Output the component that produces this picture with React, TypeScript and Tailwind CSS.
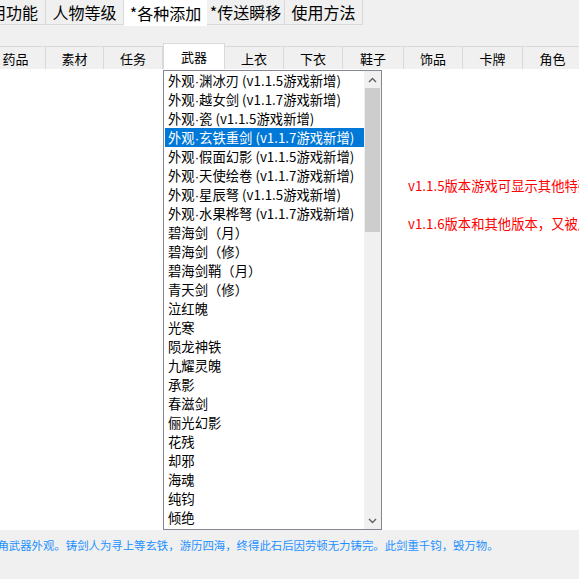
const font = { fontFamily: '"Noto Sans CJK SC", "Noto Sans", sans-serif' };

const topTabs = [
  { label: "常用功能", w: "w-[79px] -ml-[33px]" },
  { label: "人物等级", w: "w-[78px]" },
  { label: "*各种添加", w: "w-[83px]", active: true },
  { label: "*传送瞬移", w: "w-[78px]" },
  { label: "使用方法", w: "w-[78px]" },
];

const subTabs = [
  { label: "药品", w: "w-[60px] -ml-[14px]" },
  { label: "素材", w: "w-[58px]" },
  { label: "任务", w: "w-[59px]" },
  { label: "武器", w: "w-[62px]", active: true },
  { label: "上衣", w: "w-[59px]" },
  { label: "下衣", w: "w-[59px]" },
  { label: "鞋子", w: "w-[61px]" },
  { label: "饰品", w: "w-[59px]" },
  { label: "卡牌", w: "w-[60px]" },
  { label: "角色", w: "w-[60px]" },
];

const items = [
  "外观·渊冰刃 (v1.1.5游戏新增)",
  "外观·越女剑 (v1.1.7游戏新增)",
  "外观·瓷 (v1.1.5游戏新增)",
  "外观·玄铁重剑 (v1.1.7游戏新增)",
  "外观·假面幻影 (v1.1.5游戏新增)",
  "外观·天使绘卷 (v1.1.7游戏新增)",
  "外观·星辰弩 (v1.1.5游戏新增)",
  "外观·水果桦弩 (v1.1.7游戏新增)",
  "碧海剑（月）",
  "碧海剑（修）",
  "碧海剑鞘（月）",
  "青天剑（修）",
  "泣红魄",
  "光寒",
  "陨龙神铁",
  "九耀灵魄",
  "承影",
  "春滋剑",
  "俪光幻影",
  "花残",
  "却邪",
  "海魂",
  "纯钧",
  "倾绝",
];

function Chevron({ up }: { up?: boolean }) {
  return (
    <svg width="9" height="6" viewBox="0 0 9 6">
      <polyline
        points={up ? "1,5 4.5,1.5 8,5" : "1,1 4.5,4.5 8,1"}
        fill="none"
        stroke="#606060"
        strokeWidth="1.4"
      />
    </svg>
  );
}

// the middle dot is narrow in the original font, so set it in a latin face
function ItemText({ text }: { text: string }) {
  const parts = text.split("·");
  if (parts.length < 2) return <>{text}</>;
  return (
    <>
      {parts[0]}
      <span style={{ fontFamily: '"Liberation Sans", sans-serif' }}>·</span>
      {parts[1]}
    </>
  );
}

export default function App() {
  return (
    <div
      className="flex h-[579px] w-[579px] flex-col overflow-hidden bg-[#f0f0f0] text-black"
      style={font}
    >
      {/* top tab strip */}
      <div className="flex h-[26px] shrink-0 items-start">
        {topTabs.map((t) =>
          t.active ? (
            <div
              key={t.label}
              className={`${t.w} flex h-[26px] shrink-0 items-center justify-center bg-white text-[16px] leading-none`}
            >
              {t.label}
            </div>
          ) : (
            <div
              key={t.label}
              className={`${t.w} flex h-[25px] shrink-0 items-center justify-center border-r border-b border-[#d9d9d9] text-[16px] leading-none`}
            >
              {t.label}
            </div>
          )
        )}
      </div>

      <div className="h-[17px] shrink-0" />

      {/* weapon category tabs */}
      <div className="flex h-[26px] shrink-0 items-end">
        {subTabs.map((t) =>
          t.active ? (
            <div
              key={t.label}
              className={`${t.w} flex h-[26px] shrink-0 items-center justify-center border-x border-t border-[#d9d9d9] bg-white pb-[1px] text-[13px] leading-none`}
            >
              {t.label}
            </div>
          ) : (
            <div
              key={t.label}
              className={`${t.w} flex h-[23px] shrink-0 items-center justify-center border-r border-t border-[#d9d9d9] text-[13px] leading-none`}
            >
              {t.label}
            </div>
          )
        )}
      </div>

      {/* content */}
      <div className="flex h-[461px] shrink-0 bg-white">
        <div className="ml-[163px] mt-[1px] flex h-[460px] w-[219px] shrink-0 border border-[#828790] bg-white">
          <div className="flex-1 overflow-hidden pl-[1px]">
            {items.map((it, i) => (
              <div
                key={it}
                className={`h-[19px] whitespace-nowrap pl-[3px] text-[13.33px] leading-[19px] ${
                  i === 3 ? "bg-[#0078d7] text-white" : ""
                }`}
              >
                <ItemText text={it} />
              </div>
            ))}
          </div>
          <div className="flex w-[17px] shrink-0 flex-col bg-[#f0f0f0]">
            <div className="flex h-[17px] items-center justify-center">
              <Chevron up />
            </div>
            <div className="mx-[1px] h-[144px] bg-[#cdcdcd]" />
            <div className="flex-1" />
            <div className="flex h-[17px] items-center justify-center">
              <Chevron />
            </div>
          </div>
        </div>
        <div className="ml-[26px] flex flex-col gap-[19px] whitespace-nowrap pt-[107px] text-[13.33px] leading-[19px] text-[#ff0000]">
          <div>v1.1.5版本游戏可显示其他特殊武器外观</div>
          <div>v1.1.6版本和其他版本，又被屏蔽了</div>
        </div>
      </div>

      {/* description */}
      <div className="whitespace-nowrap pt-[6px] text-[11.4px] leading-[19px] text-[#1e90ff]">
        <span className="-ml-[14px] inline-block">
          主角武器外观。铸剑人为寻上等玄铁，游历四海，终得此石后因劳顿无力铸完。此剑重千钧，毁万物。
        </span>
      </div>
    </div>
  );
}
